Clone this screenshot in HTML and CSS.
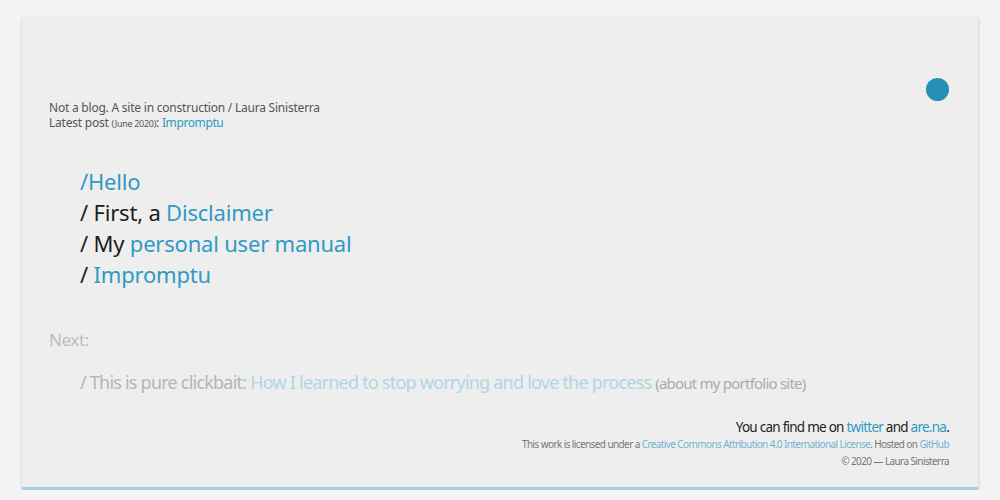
FILE: index.html
```html
<!DOCTYPE html>
<html lang="en">
<head>
<meta charset="utf-8">
<title>Not a blog</title>
<link rel="stylesheet" href="styles.css">
</head>
<body>
<main class="card">
  <header class="top">
    <div class="intro">
      <p class="tagline">Not a blog. A site in construction / Laura Sinisterra</p>
      <p class="latest">Latest post <small>(June 2020)</small>: <a href="#">Impromptu</a></p>
    </div>
    <span class="dot"></span>
  </header>
  <nav class="posts">
    <p><a href="#">/Hello</a></p>
    <p>/ First, a <a href="#">Disclaimer</a></p>
    <p>/ My <a href="#">personal user manual</a></p>
    <p>/ <a href="#">Impromptu</a></p>
  </nav>
  <section class="next">
    <p class="next-label">Next:</p>
    <p class="next-item">/ This is pure clickbait: <a href="#">How I learned to stop worrying and love the process</a> <small>(about my portfolio site)</small></p>
  </section>
  <footer class="foot">
    <p class="find">You can find me on <a href="#">twitter</a> and <a href="#">are.na</a>.</p>
    <p class="license">This work is licensed under a <a href="#">Creative Commons Attribution 4.0 International License</a>. Hosted on <a href="#">GitHub</a></p>
    <p class="copy">© 2020 — Laura Sinisterra</p>
  </footer>
</main>
</body>
</html>
```
FILE: styles.css
```css
html, body {
  margin: 0;
  padding: 0;
  background: #f3f3f3;
}
body {
  padding: 18px 22px 0 22px;
  font-family: "Noto Sans", "Open Sans", sans-serif;
  color: #222;
}
p { margin: 0; }
a { color: #3199c3; text-decoration: none; }

.card {
  background: #eeeeee;
  height: 472px;
  box-sizing: border-box;
  padding: 60px 29px 0 27px;
  border-bottom: 3px solid #a8d2e0;
  box-shadow: 0 2px 3px rgba(150, 200, 220, 0.45), 1px 0 2px rgba(170, 210, 225, 0.4), -1px 0 2px rgba(200, 220, 230, 0.3);
  display: flex;
  flex-direction: column;
}

.top {
  display: flex;
  justify-content: space-between;
  align-items: flex-start;
}
.intro {
  padding-top: 22px;
  font-size: 12px;
  line-height: 15px;
  letter-spacing: -0.22px;
  color: #555;
}
.intro small { font-size: 9px; letter-spacing: -0.3px; }
.latest a { letter-spacing: -0.4px; }
.dot {
  width: 23px;
  height: 23px;
  border-radius: 50%;
  background: #2490b5;
}

.posts {
  margin-top: 35px;
  padding-left: 31px;
  font-size: 22px;
  line-height: 31px;
  letter-spacing: -0.2px;
  color: #1c1c1c;
}

.next {
  margin-top: 39px;
  color: #bcbcbc;
}
.next-label { font-size: 17px; line-height: 22px; letter-spacing: -0.4px; }
.next-item {
  margin-top: 20px;
  padding-left: 31px;
  font-size: 18px;
  line-height: 22px;
  letter-spacing: -0.78px;
  color: #b5b5b5;
}
.next-item a { color: #b0d6e4; }
.next-item small { font-size: 15px; color: #ababab; }

.foot {
  margin-top: 24px;
  text-align: right;
  color: #777;
}
.find { font-size: 13.5px; line-height: 18px; letter-spacing: -0.75px; color: #222; }
.license { font-size: 10px; line-height: 17px; letter-spacing: -0.6px; }
.license a { color: #6fb5cf; }
.copy { font-size: 10px; line-height: 17px; letter-spacing: -0.6px; }
```
